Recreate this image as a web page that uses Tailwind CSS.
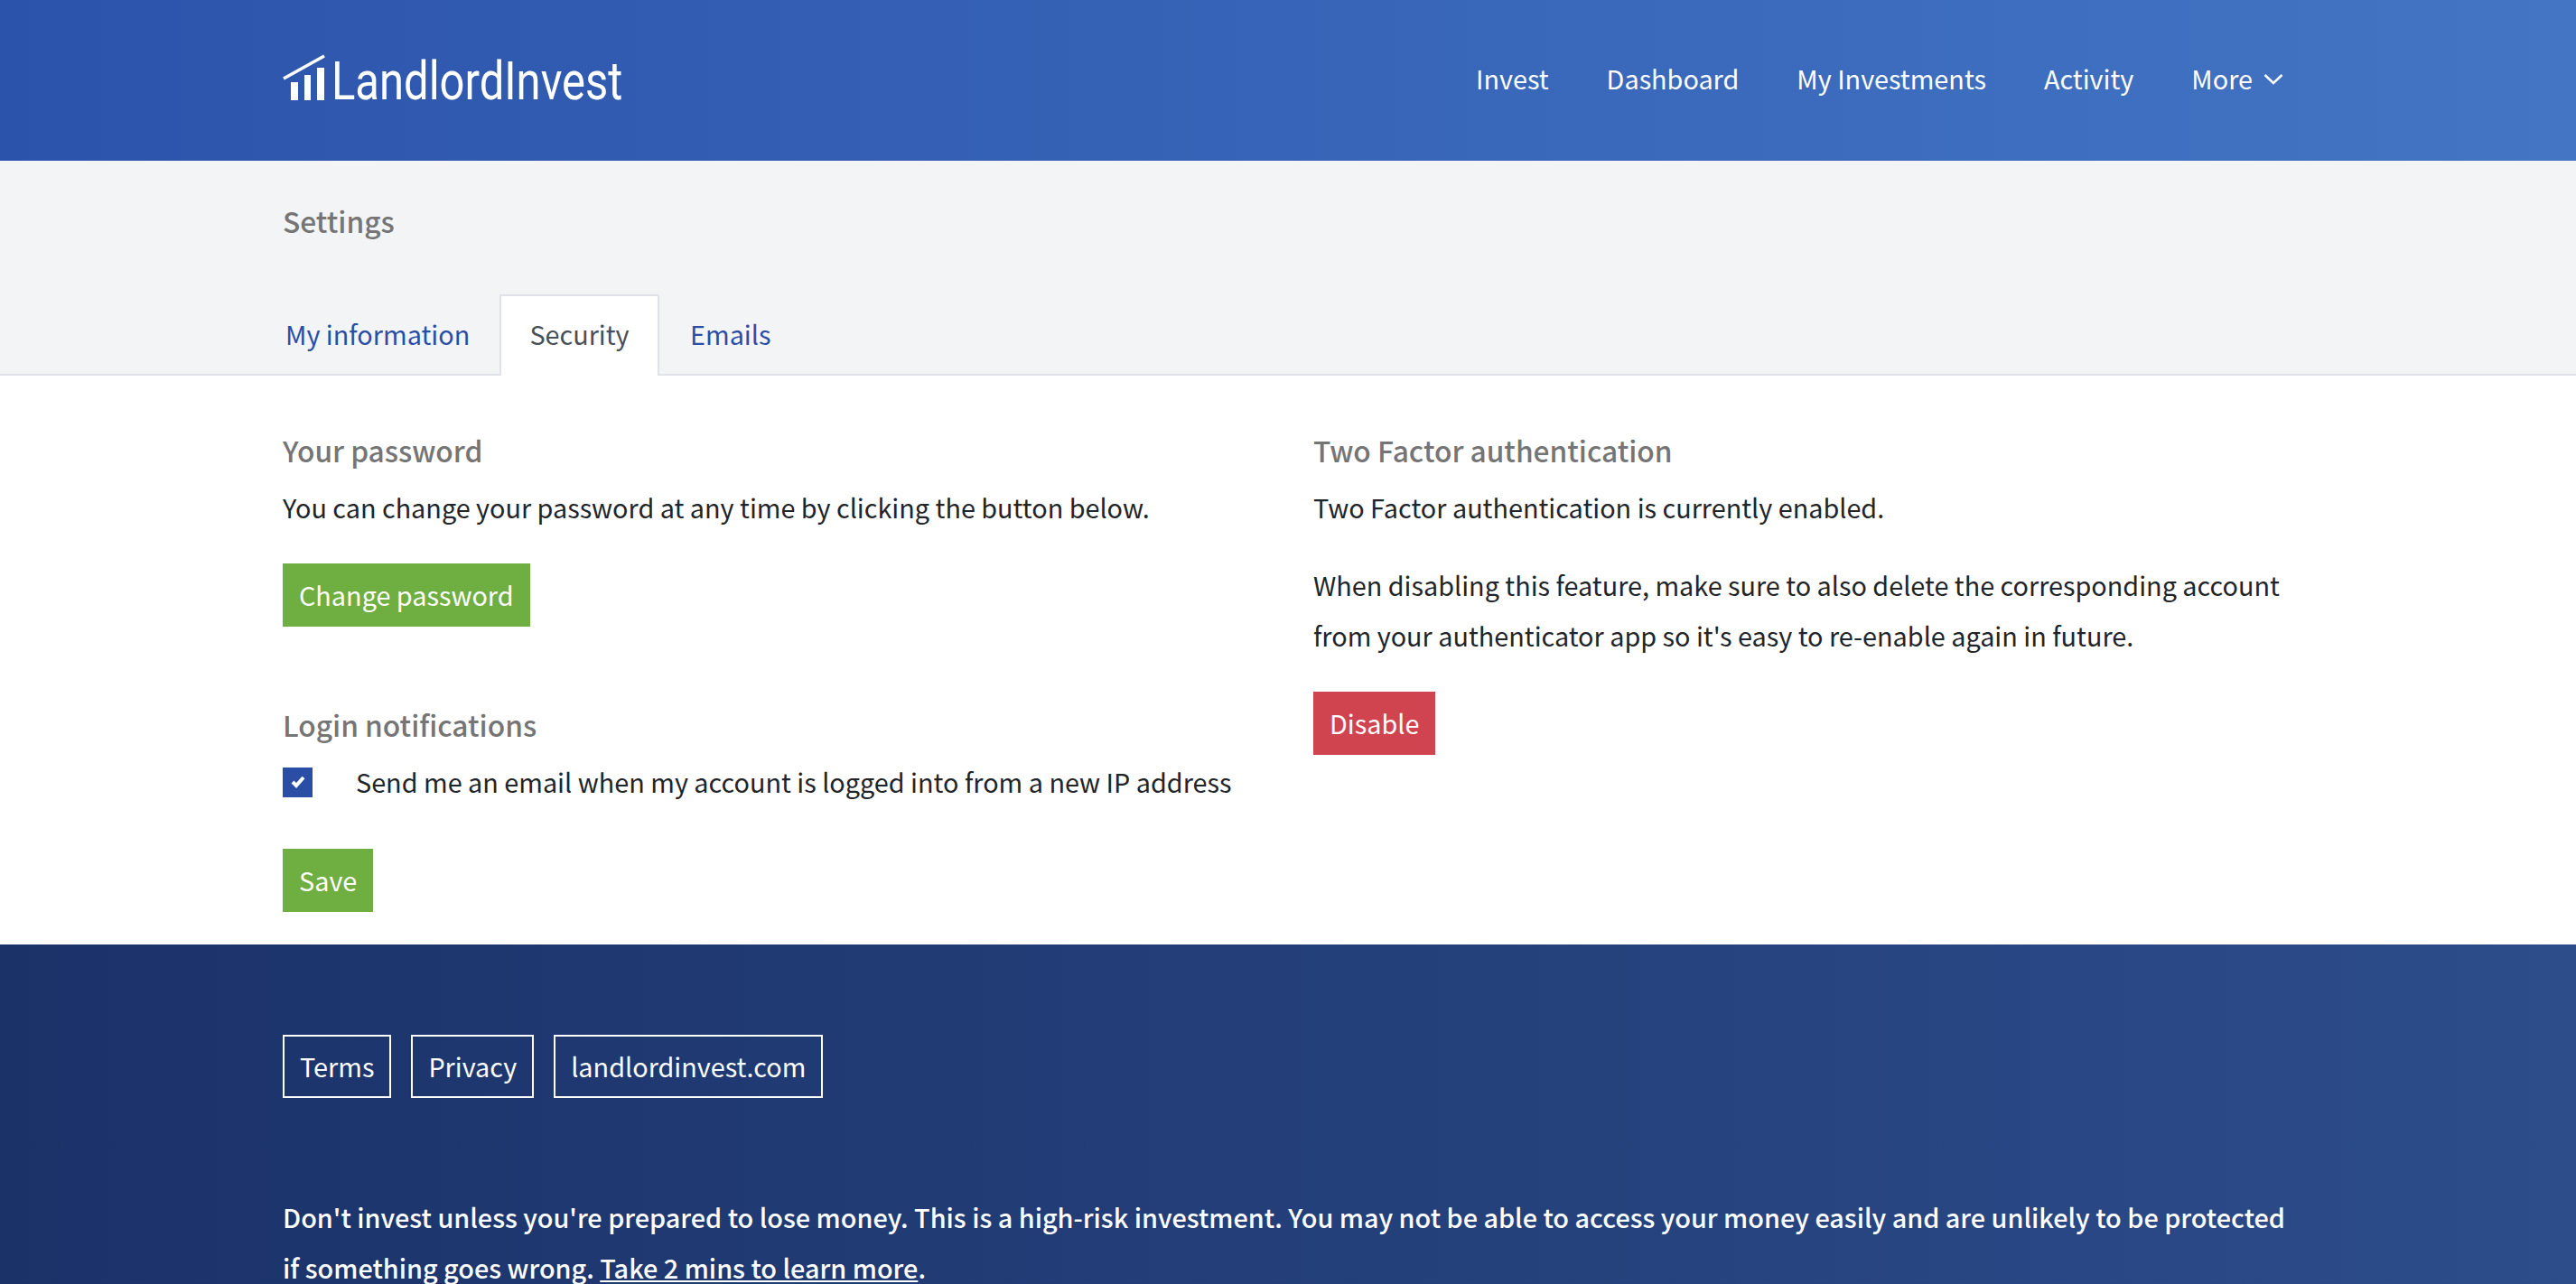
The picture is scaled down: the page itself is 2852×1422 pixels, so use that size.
<!DOCTYPE html>
<html lang="en">
<head>
    <meta charset="UTF-8">
    <title>Settings - LandlordInvest</title>
    <script src="https://cdn.jsdelivr.net/npm/@tailwindcss/browser@4"></script>
</head>
<body class="h-[1422px] overflow-hidden bg-white text-[28.8px] leading-[56px] text-[#212529] font-['Noto_Sans_CJK_SC','Source_Sans_Pro',sans-serif]">
    <header class="h-[178px] bg-gradient-to-r from-[#2c53ab] to-[#4375c4] pl-[313px] pr-[324px] flex items-center justify-between">
        <a class="flex items-end text-white mt-[-8px]">
            <svg width="47" height="51" viewBox="0 0 47 51" class="mr-[7px]">
                <path d="M1 27 L46 2" stroke="#fff" stroke-width="3.5" fill="none"/>
                <rect x="9" y="31" width="8" height="20" fill="#fff"/>
                <rect x="24" y="23" width="7" height="28" fill="#fff"/>
                <rect x="38" y="15" width="8" height="36" fill="#fff"/>
            </svg>
            <span class="font-['Roboto',sans-serif] text-[59px] leading-[42px] h-[42px] origin-left scale-x-[0.83] w-[320px] whitespace-nowrap">LandlordInvest</span>
        </a>
        <nav class="flex items-center gap-[64px] text-white mt-[-4px]">
            <a>Invest</a>
            <a>Dashboard</a>
            <a>My Investments</a>
            <a>Activity</a>
            <a class="flex items-center gap-[12px]">More
                <svg width="22" height="13" viewBox="0 0 22 13" fill="none" stroke="#fff" stroke-width="2.5"><path d="M1.5 2 L11 11 L20.5 2"/></svg>
            </a>
        </nav>
    </header>

    <section class="h-[238px] bg-[#f3f4f6] border-b-2 border-[#e0e2ea] px-[313px] flex flex-col justify-between">
        <h1 class="pt-[38px] font-medium text-[#757575] text-[31.7px]">Settings</h1>
        <div class="flex h-[90px] mb-[-2px]">
            <a class="pl-[3px] pt-[16px] w-[240px] text-[#2a4ea6]">My information</a>
            <a class="w-[177px] bg-white border-2 border-b-0 border-[#e0e2ea] text-center pt-[14px] text-[#495057]">Security</a>
            <a class="pl-[34px] pt-[16px] text-[#2a4ea6]">Emails</a>
        </div>
    </section>

    <main class="h-[630px] px-[313px] grid grid-cols-[1141px_1fr]">
        <div class="pt-[54px]">
            <h2 class="font-medium text-[#757575] text-[31.7px] leading-[56px]">Your password</h2>
            <p class="mt-[8px]">You can change your password at any time by clicking the button below.</p>
            <button class="mt-[34px] h-[70px] px-[18px] bg-[#6fae41] text-white">Change password</button>
            <h2 class="mt-[80px] font-medium text-[#757575] text-[31.7px] leading-[56px]">Login notifications</h2>
            <label class="mt-[8px] flex items-center">
                <span class="w-[33px] h-[33px] bg-[#2a4ea6] flex items-center justify-center">
                    <svg width="16" height="14" viewBox="0 0 16 14" fill="none" stroke="#fff" stroke-width="4"><path d="M2 7 L6 11 L14 2"/></svg>
                </span>
                <span class="ml-[48px]">Send me an email when my account is logged into from a new IP address</span>
            </label>
            <button class="mt-[46px] h-[70px] px-[18px] bg-[#6fae41] text-white">Save</button>
        </div>
        <div class="pt-[54px]">
            <h2 class="font-medium text-[#757575] text-[31.7px] leading-[56px]">Two Factor authentication</h2>
            <p class="mt-[8px]">Two Factor authentication is currently enabled.</p>
            <p class="mt-[30px]">When disabling this feature, make sure to also delete the corresponding account from your authenticator app so it's easy to re-enable again in future.</p>
            <button class="mt-[34px] h-[70px] px-[18px] bg-[#cf444f] text-white">Disable</button>
        </div>
    </main>

    <footer class="h-[376px] bg-gradient-to-r from-[#1b3269] to-[#2c4c8a] px-[313px] pt-[100px] text-white overflow-hidden">
        <div class="flex gap-[22px]">
            <a class="h-[70px] px-[17px] border-2 border-white flex items-center">Terms</a>
            <a class="h-[70px] px-[17px] border-2 border-white flex items-center">Privacy</a>
            <a class="h-[70px] px-[17px] border-2 border-white flex items-center">landlordinvest.com</a>
        </div>
        <p class="mt-[104px] font-medium">Don't invest unless you're prepared to lose money. This is a high-risk investment. You may not be able to access your money easily and are unlikely to be protected if something goes wrong. <a class="underline">Take 2 mins to learn more</a>.</p>
    </footer>
</body>
</html>
